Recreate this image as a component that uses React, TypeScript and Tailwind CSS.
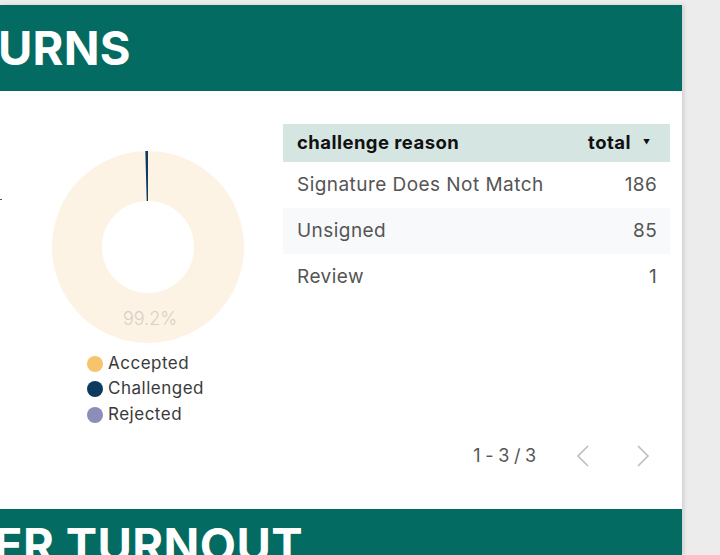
const FONT = "font-['Inter','Noto_Sans',sans-serif]"

const rows = [
  {reason: "Signature Does Not Match", total: 186},
  {reason: "Unsigned", total: 85},
  {reason: "Review", total: 1},
]

const legend = [
  {label: "Accepted", color: "bg-[#f5c46b]"},
  {label: "Challenged", color: "bg-[#0d3b60]"},
  {label: "Rejected", color: "bg-[#8c8eb9]"},
]

function Donut() {
  // ring: outer r 96, inner r 46
  const cx = 96
  const cy = 96
  const a = (-1.6 * Math.PI) / 180
  const x1 = cx + 96 * Math.sin(a)
  const y1 = cy - 96 * Math.cos(a)
  const x2 = cx + 46 * Math.sin(a)
  const y2 = cy - 46 * Math.cos(a)
  return (
    <svg width="192" height="192" viewBox="0 0 192 192" className="block">
      <circle cx={cx} cy={cy} r="71" fill="none" stroke="#fdf3e4" strokeWidth="50" />
      <path
        d={`M ${cx} ${cy - 96} L ${cx} ${cy - 46} L ${x2} ${y2} L ${x1} ${y1} Z`}
        fill="#0d3b60"
      />
      <text
        x={cx + 2}
        y="174"
        textAnchor="middle"
        fontSize="18"
        fontWeight="300"
        fill="#d8cfc6"
        fontFamily="Inter, sans-serif"
      >
        99.2%
      </text>
    </svg>
  )
}

export default function App() {
  return (
    <div className={`w-[720px] h-[555px] bg-[#ececec] overflow-hidden pt-[5px] ${FONT}`}>
      <div className="w-[682px] h-[550px] bg-white shadow-[2px_0_4px_rgba(0,0,0,0.12)] flex flex-col">
        <div className="h-[86px] shrink-0 bg-[#036b61] flex items-center overflow-hidden">
          <h1 className="-ml-[2px] text-[47px] leading-[56px] font-bold text-white tracking-[0.2px]">URNS</h1>
        </div>

        <div className="h-[418px] shrink-0 flex">
          <div className="w-[283px] shrink-0 relative">
            <div className="absolute left-0 top-[108px] w-[2px] h-[1px] bg-[#555]" />
            <div className="pl-[52px] pt-[60px]">
              <Donut />
            </div>
            <div className="ml-[87px] mt-[10px] flex flex-col gap-[4.5px]">
              {legend.map(item => (
                <div key={item.label} className="flex items-center gap-[5px] h-[21px]">
                  <span className={`w-[16px] h-[16px] rounded-full ${item.color}`} />
                  <span className="text-[17px] text-[#3a3a3a] tracking-[0.5px]">{item.label}</span>
                </div>
              ))}
            </div>
          </div>

          <div className="w-[387px] shrink-0 pt-[33px] flex flex-col">
            <div className="h-[38px] bg-[#d5e6e2] flex items-center pl-[14px] pr-[20px]">
              <span className="flex-1 text-[18.5px] font-bold text-[#111] tracking-[0.45px]">challenge reason</span>
              <span className="text-[18.5px] font-bold text-[#111] tracking-[0.45px]">total</span>
              <span className="ml-[12px] text-[7px] text-[#111]">▼</span>
            </div>
            {rows.map((row, i) => (
              <div
                key={row.reason}
                className={`h-[46px] flex items-center pl-[14px] pr-[13px] ${i === 1 ? "bg-[#f8f9fa]" : "bg-white"}`}
              >
                <span className="flex-1 text-[19px] text-[#555] tracking-[0.45px]">{row.reason}</span>
                <span className="text-[19px] text-[#555] tracking-[0.3px]">{row.total}</span>
              </div>
            ))}
            <div className="mt-[142px] flex items-center justify-end pr-[20px] text-[#555]">
              <span className="text-[18px] tracking-[-0.2px] mr-[40px]">1 - 3 / 3</span>
              <svg width="14" height="22" viewBox="0 0 14 22" className="mr-[46px]">
                <path d="M12 1 L2 11 L12 21" fill="none" stroke="#bdbdbd" strokeWidth="1.6" />
              </svg>
              <svg width="14" height="22" viewBox="0 0 14 22">
                <path d="M2 1 L12 11 L2 21" fill="none" stroke="#bdbdbd" strokeWidth="1.6" />
              </svg>
            </div>
          </div>
        </div>

        <div className="h-[46px] shrink-0 bg-[#036b61] overflow-hidden pt-[8px]">
          <h2 className="-ml-[6px] text-[47px] leading-[56px] font-bold text-white tracking-[0.4px] whitespace-nowrap">
            ER TURNOUT
          </h2>
        </div>
      </div>
    </div>
  )
}
